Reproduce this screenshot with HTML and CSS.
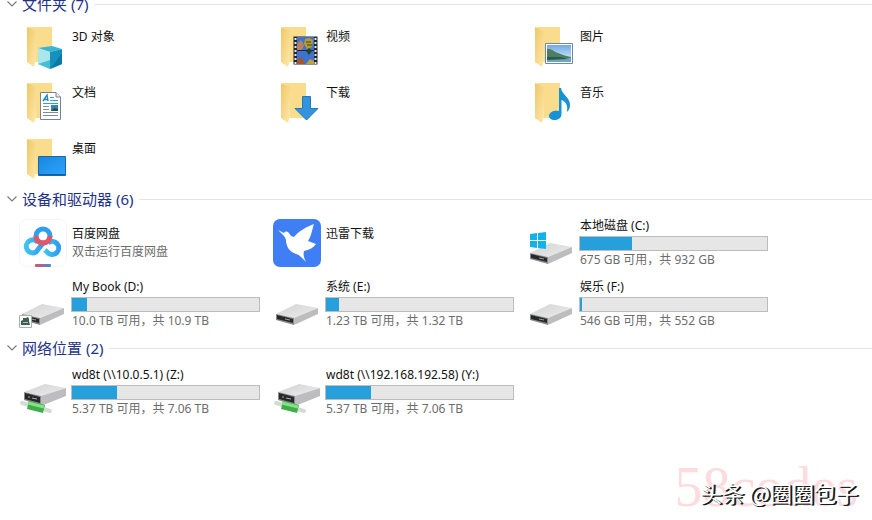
FILE: index.html
```
<!DOCTYPE html>
<html lang="zh-CN">
<head>
    <meta charset="UTF-8">
    <meta name="viewport" content="width=device-width, initial-scale=1.0">
    <title>此电脑</title>
    <link rel="stylesheet" href="styles.css">
</head>
<body>
    <!-- shared shapes -->
    <svg class="defs" width="0" height="0" aria-hidden="true">
        <defs>
            <linearGradient id="flap" x1="0" y1="0" x2="1" y2="1">
                <stop offset="0" stop-color="#f0c665"/>
                <stop offset="1" stop-color="#fde9ac"/>
            </linearGradient>
            <linearGradient id="screen" x1="0" y1="0" x2="1" y2="1">
                <stop offset="0" stop-color="#1787e0"/>
                <stop offset="1" stop-color="#2fa4fb"/>
            </linearGradient>
            <linearGradient id="lid" x1="0" y1="0" x2="1" y2="1">
                <stop offset="0" stop-color="#d2d2d2"/>
                <stop offset="1" stop-color="#ededed"/>
            </linearGradient>
            <linearGradient id="sky" x1="0" y1="0" x2="0" y2="1">
                <stop offset="0" stop-color="#6fa9e6"/>
                <stop offset="1" stop-color="#e4f1fa"/>
            </linearGradient>
            <linearGradient id="cloud" x1="0" y1="0" x2="1" y2="0">
                <stop offset="0" stop-color="#3fc4ef"/>
                <stop offset="1" stop-color="#2f9df0"/>
            </linearGradient>
            <linearGradient id="dash" x1="0" y1="0" x2="1" y2="0">
                <stop offset="0" stop-color="#e8505f"/>
                <stop offset="1" stop-color="#3d8fd8"/>
            </linearGradient>
            <symbol id="folder" viewBox="0 0 48 48">
                <path d="M10 5H33V40H16Z" fill="#f9dd8d"/>
                <path d="M8 5L17 9V38L15 45L8 40Z" fill="url(#flap)"/>
            </symbol>
            <symbol id="drive" viewBox="0 0 48 48">
                <path d="M3 34L23 24L45 28L21 38Z" fill="url(#lid)"/>
                <path d="M21 38L45 28V34L21 45Z" fill="#bdbdbf"/>
                <path d="M3 34L21 38V45L3 40Z" fill="#8a8a8c"/>
                <path d="M4 35L20 39V43L4 39Z" fill="#262829"/>
                <path d="M12 39L17 40" stroke="#8fa39a" stroke-width="1"/>
            </symbol>
            <symbol id="netdrive" viewBox="0 0 48 48">
                <path d="M5 24L26 16L47 20L22 28Z" fill="url(#lid)"/>
                <path d="M22 28L47 20V28L22 38Z" fill="#bdbdbf"/>
                <path d="M5 24L22 28V38L5 32Z" fill="#8a8a8c"/>
                <path d="M6 25L21 29V35L6 31Z" fill="#262829"/>
                <path d="M9 29L11 29M13 30L18 31" stroke="#a5b3ac" stroke-width="1"/>
                <path d="M3 35L31 43" stroke="#d3dcd3" stroke-width="4" stroke-linecap="round"/>
                <path d="M9 37L25 41" stroke="#3fae49" stroke-width="8"/>
                <path d="M9 35L25 39" stroke="#86e08a" stroke-width="3"/>
            </symbol>
            <symbol id="chevron" viewBox="0 0 10 6">
                <path d="M0.500 0.500L5 5L9.500 0.500" fill="none" stroke="#777" stroke-width="1.100"/>
            </symbol>
        </defs>
    </svg>

    <main class="explorer">
        <section>
            <h2 class="group-title">
                <button type="button"><svg class="chevron"><use href="#chevron"/></svg>文件夹 (7)</button>
            </h2>
            <ul class="tiles folders">
                <li>
                    <a class="tile" href="#">
                        <svg class="icon" viewBox="0 0 48 48">
                            <use href="#folder"/>
                            <path d="M19 26L33 24L43 27L31 30Z" fill="#39b4d3"/>
                            <path d="M19 26L31 30V47L19 42Z" fill="#a9e6ee"/>
                            <path d="M19 42L31 38V47Z" fill="#46bfd6"/>
                            <path d="M31 30L43 27V42L31 47Z" fill="#1591bd"/>
                            <path d="M31 47L43 31V42Z" fill="#0d7aa6"/>
                        </svg>
                        <span class="info"><span class="name">3D 对象</span></span>
                    </a>
                </li>
                <li>
                    <a class="tile" href="#">
                        <svg class="icon" viewBox="0 0 48 48">
                            <use href="#folder"/>
                            <path d="M20.500 14.500H44.500V42.500H20.500Z" fill="#20242c"/>
                            <path d="M24 15H41V28H24ZM24 29H41V42H24Z" fill="#3c72d0"/>
                            <path d="M22.500 16V42M42.500 16V42" stroke="#e6e9ee" stroke-width="2" stroke-dasharray="2 2"/>
                            <path d="M24 22L28 18L31 23L29 28H24Z" fill="#b9825f"/>
                            <path d="M32 17L36 16L40 18L39 25L34 27L31 22Z" fill="#b79a30"/>
                            <path d="M33 20H38M34 23H39" stroke="#3c4414" stroke-width="1"/>
                            <path d="M36 26L39 29L36 33L33 29Z" fill="#29431d"/>
                            <path d="M24 38L29 35L32 42H24Z" fill="#a4552f"/>
                            <path d="M33 42L37 37L41 39V42Z" fill="#c1a13a"/>
                        </svg>
                        <span class="info"><span class="name">视频</span></span>
                    </a>
                </li>
                <li>
                    <a class="tile" href="#">
                        <svg class="icon" viewBox="0 0 48 48">
                            <use href="#folder"/>
                            <path d="M18.500 21.500H45.500V41.500H18.500Z" fill="#fff" stroke="#7088a8"/>
                            <path d="M20 23H44V40H20Z" fill="url(#sky)"/>
                            <path d="M20 27C24 26 27 30 31 31C35 33 40 34 44 35V37H20Z" fill="#4d7f5f"/>
                            <path d="M20 36H44V40H20Z" fill="#6fa5c4"/>
                            <path d="M20 35L33 35L42 37L20 38Z" fill="#2c5a4c"/>
                        </svg>
                        <span class="info"><span class="name">图片</span></span>
                    </a>
                </li>
                <li>
                    <a class="tile" href="#">
                        <svg class="icon" viewBox="0 0 48 48">
                            <use href="#folder"/>
                            <path d="M21.500 14.500H37L41.500 19V41.500H21.500Z" fill="#fff" stroke="#78838e"/>
                            <path d="M37 14.500V19H41.500" fill="#e7ebee" stroke="#78838e"/>
                            <path d="M24 23L28 17L29 23M25.500 21.500H29" fill="none" stroke="#1c86c4" stroke-width="1.400"/>
                            <path d="M31 19.500H35M31 22.500H39M24 25.500H39" stroke="#3b9ad0"/>
                            <path d="M24 28.500H30M24 31.500H30M24 34.500H39M24 37.500H39" stroke="#7f8d98"/>
                            <path d="M32 27H39V33H32Z" fill="#2f86b8"/>
                            <path d="M32 33L35 30L39 31V33Z" fill="#29513c"/>
                        </svg>
                        <span class="info"><span class="name">文档</span></span>
                    </a>
                </li>
                <li>
                    <a class="tile" href="#">
                        <svg class="icon" viewBox="0 0 48 48">
                            <use href="#folder"/>
                            <path d="M29.500 18.500H37.500V30.500H45L33.500 42L22 30.500H29.500Z" fill="#3293df" stroke="#2479bd"/>
                        </svg>
                        <span class="info"><span class="name">下载</span></span>
                    </a>
                </li>
                <li>
                    <a class="tile" href="#">
                        <svg class="icon" viewBox="0 0 48 48">
                            <use href="#folder"/>
                            <path d="M32 10H34C35 17 43 19 43 27C43 30 42 32 40 34C41 27 39 24 34.500 22V36C34.500 40 31 42 27 42C24 42 22 40 22 38C22 34 27 32 32 33Z" fill="#1592d8"/>
                        </svg>
                        <span class="info"><span class="name">音乐</span></span>
                    </a>
                </li>
                <li>
                    <a class="tile" href="#">
                        <svg class="icon" viewBox="0 0 48 48">
                            <use href="#folder"/>
                            <path d="M19.500 22.500H46.500V41.500H19.500Z" fill="url(#screen)" stroke="#1668a8"/>
                            <path d="M20 40.500H46" stroke="#12609e"/>
                        </svg>
                        <span class="info"><span class="name">桌面</span></span>
                    </a>
                </li>
            </ul>
        </section>

        <section>
            <h2 class="group-title">
                <button type="button"><svg class="chevron"><use href="#chevron"/></svg>设备和驱动器 (6)</button>
            </h2>
            <ul class="tiles drives">
                <li>
                    <a class="tile" href="#">
                        <svg class="icon" viewBox="0 0 48 48">
                            <rect x="0.500" y="0.500" width="47" height="47" rx="7" fill="#fff" stroke="#f6f6f6"/>
                            <g fill="none" stroke-width="5">
                                <path d="M24 24L17 33A6.500 6.500 0 1 1 19 23.500" stroke="url(#cloud)"/>
                                <path d="M29 24A6.500 6.500 0 1 1 29 34L26 31" stroke="url(#cloud)"/>
                                <circle cx="24" cy="17" r="7" stroke="#2f9df0"/>
                                <path d="M17 17C17 21 20 24 24 24S31 21 31 17" stroke="#e85463"/>
                            </g>
                            <rect x="16" y="45" width="16" height="3" rx="1" fill="url(#dash)"/>
                        </svg>
                        <span class="info">
                            <span class="name">百度网盘</span>
                            <span class="detail">双击运行百度网盘</span>
                        </span>
                    </a>
                </li>
                <li>
                    <a class="tile" href="#">
                        <svg class="icon" viewBox="0 0 48 48">
                            <rect width="48" height="48" rx="7" fill="#3f7ef5"/>
                            <path d="M5 11L11 14C13 11 16 13 18 17L21 18C26 12 33 8 41 5C39 10 39 16 35 22L43 25C40 29 36 31 31 32C30 36 31 39 33 43C29 39 27 36 23 35C17 33 13 28 13 21C12 17 9 15 5 11Z" fill="#fff"/>
                        </svg>
                        <span class="info"><span class="name">迅雷下载</span></span>
                    </a>
                </li>
                <li>
                    <a class="tile" href="#">
                        <svg class="icon" viewBox="0 0 48 48">
                            <use href="#drive"/>
                            <path d="M3 15L10 14V21H3ZM11 14L19 13V21H11ZM3 22H10V29L3 28ZM11 22H19V30L11 29Z" fill="#12b3ea"/>
                        </svg>
                        <span class="info">
                            <span class="name">本地磁盘 (C:)</span>
                            <span class="bar"><span class="used" style="width: 28%"></span></span>
                            <span class="detail">675 GB 可用，共 932 GB</span>
                        </span>
                    </a>
                </li>
                <li>
                    <a class="tile" href="#">
                        <svg class="icon" viewBox="0 0 48 48">
                            <use href="#drive"/>
                            <path d="M0.500 35.500H12.500V47.500H0.500Z" fill="#f8fbf9" stroke="#a3b5aa"/>
                            <path d="M2 45V41L4 40V38H7L9 37L10 39V41L11 45Z" fill="#3f5e50"/>
                            <path d="M4 42.500H9" stroke="#a9c4b5"/>
                        </svg>
                        <span class="info">
                            <span class="name">My Book (D:)</span>
                            <span class="bar"><span class="used" style="width: 8%"></span></span>
                            <span class="detail">10.0 TB 可用，共 10.9 TB</span>
                        </span>
                    </a>
                </li>
                <li>
                    <a class="tile" href="#">
                        <svg class="icon" viewBox="0 0 48 48"><use href="#drive"/></svg>
                        <span class="info">
                            <span class="name">系统 (E:)</span>
                            <span class="bar"><span class="used" style="width: 7%"></span></span>
                            <span class="detail">1.23 TB 可用，共 1.32 TB</span>
                        </span>
                    </a>
                </li>
                <li>
                    <a class="tile" href="#">
                        <svg class="icon" viewBox="0 0 48 48"><use href="#drive"/></svg>
                        <span class="info">
                            <span class="name">娱乐 (F:)</span>
                            <span class="bar"><span class="used" style="width: 1%"></span></span>
                            <span class="detail">546 GB 可用，共 552 GB</span>
                        </span>
                    </a>
                </li>
            </ul>
        </section>

        <section>
            <h2 class="group-title">
                <button type="button"><svg class="chevron"><use href="#chevron"/></svg>网络位置 (2)</button>
            </h2>
            <ul class="tiles drives">
                <li>
                    <a class="tile" href="#">
                        <svg class="icon" viewBox="0 0 48 48"><use href="#netdrive"/></svg>
                        <span class="info">
                            <span class="name">wd8t (\\10.0.5.1) (Z:)</span>
                            <span class="bar"><span class="used" style="width: 24%"></span></span>
                            <span class="detail">5.37 TB 可用，共 7.06 TB</span>
                        </span>
                    </a>
                </li>
                <li>
                    <a class="tile" href="#">
                        <svg class="icon" viewBox="0 0 48 48"><use href="#netdrive"/></svg>
                        <span class="info">
                            <span class="name">wd8t (\\192.168.192.58) (Y:)</span>
                            <span class="bar"><span class="used" style="width: 24%"></span></span>
                            <span class="detail">5.37 TB 可用，共 7.06 TB</span>
                        </span>
                    </a>
                </li>
            </ul>
        </section>
    </main>

    <div class="watermark">58codes</div>
    <div class="credit">头条 @圈圈包子</div>
</body>
</html>
```
FILE: styles.css
```
*{
    margin: 0;
    padding: 0;
    list-style: none;
    box-sizing: border-box;
}

body{
    min-height: 100vh;
    position: relative;
    overflow: hidden;
    background-color: white;
    font-family: "Noto Sans", "Noto Sans CJK SC", sans-serif;
    font-size: 12px;
    line-height: 18px;
    color: #111;
}

.defs{
    position: absolute;
}

/* list is scrolled a little past the first heading */
.explorer{
    margin-top: -7px;
}

.group-title{
    display: flex;
    align-items: center;
    gap: 6px;
    padding-left: 7px;
    margin-bottom: 3px;
}

.group-title::after{
    content: "";
    flex: 1;
    height: 1px;
    background-color: #e2e6ea;
}

.group-title button{
    display: flex;
    align-items: center;
    gap: 5px;
    border: none;
    background: none;
    font-family: inherit;
    font-size: 15px;
    line-height: 22px;
    color: #1e3287;
}

.chevron{
    width: 10px;
    height: 6px;
}

.tiles{
    display: grid;
    grid-template-columns: repeat(auto-fill, 254px);
    padding-left: 19px;
    margin-bottom: 2px;
}

.folders{
    grid-auto-rows: 56px;
}

.drives{
    grid-auto-rows: 61px;
}

.tile{
    height: 100%;
    display: flex;
    align-items: center;
    gap: 4px;
    padding-right: 13px;
    color: inherit;
    text-decoration: none;
}

.drives .tile{
    padding-bottom: 1px;
}

.icon{
    width: 48px;
    height: 48px;
    flex-shrink: 0;
}

.info{
    flex: 1;
    min-height: 36px;
}

.name,
.detail{
    display: block;
    padding-left: 1px;
    white-space: nowrap;
}

.detail{
    color: #6d6d6d;
}

.bar{
    display: block;
    height: 15px;
    margin-top: 1px;
    border: 1px solid #bcbcbc;
    background-color: #e6e6e6;
}

.used{
    display: block;
    height: 100%;
    background-color: #26a0da;
}

.watermark,
.credit{
    position: absolute;
    right: 14px;
    white-space: nowrap;
}

.watermark{
    bottom: 1px;
    font-family: "Liberation Serif", serif;
    font-size: 56px;
    line-height: 64px;
    color: #fcdcde;
}

.credit{
    bottom: 13px;
    font-family: "Noto Sans CJK SC", sans-serif;
    font-size: 22px;
    line-height: 30px;
    color: white;
    text-shadow: 1px 1px 0 #1a1a1a, 2px 1px 0 #1a1a1a;
}
```
